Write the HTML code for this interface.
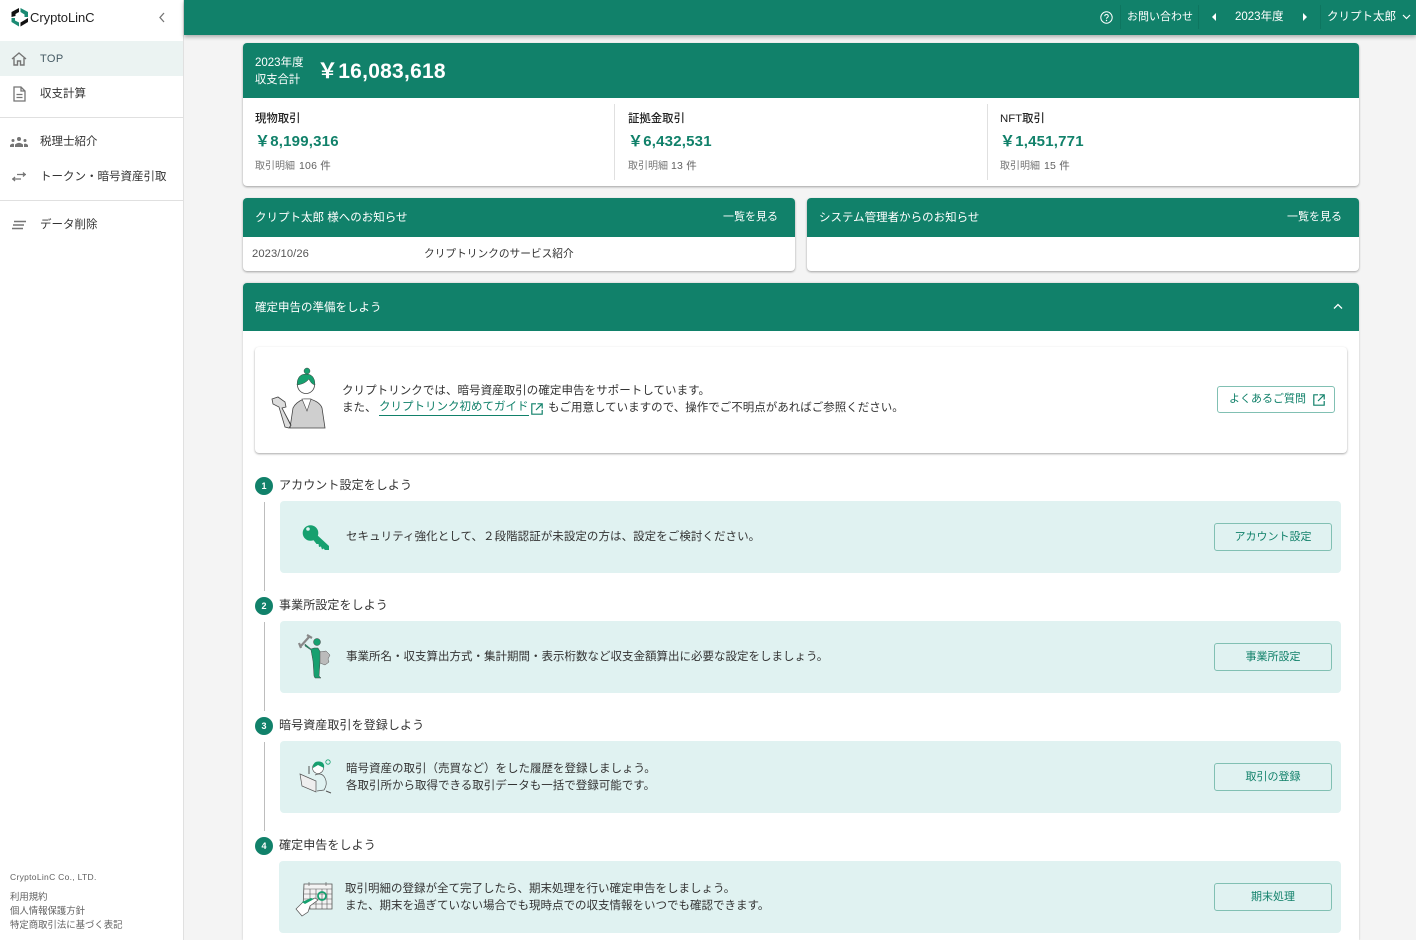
<!DOCTYPE html>
<html lang="ja"><head><meta charset="utf-8"><title>CryptoLinC</title>
<style>
html,body{margin:0;padding:0}
body{width:1416px;height:940px;overflow:hidden;background:#f4f4f4;position:relative;font-family:"Liberation Sans","Noto Sans CJK JP",sans-serif;color:#333}
.a{position:absolute}
.t{position:absolute;white-space:nowrap;line-height:18px;font-size:11.500px;color:#333}
.w{color:#fff}
.card{position:absolute;background:#fff;border-radius:4px;box-shadow:0 1px 2px rgba(0,0,0,.35)}
.bar{position:absolute;background:#11816a}
.sep{position:absolute;left:0;width:183px;height:1px;background:#e0e0e0}
.btn{position:absolute;box-sizing:border-box;border:1px solid #81c0b3;border-radius:3px;color:#11816a;font-size:11px;line-height:26px;text-align:center;white-space:nowrap}
.num{position:absolute;left:255px;width:18px;height:18px;border-radius:50%;background:#11816a;color:#fff;font-size:9px;font-weight:bold;line-height:19px;text-align:center}
.step{position:absolute;background:#e0f2f1;border-radius:4px;height:72px;right:75px}
.line{position:absolute;left:264px;width:1px;background:#bdbdbd}
.h{font-size:12px;letter-spacing:.1px}
.m{font-size:15px;font-weight:bold;color:#11816a;letter-spacing:.2px}
.n{font-size:11.400px;font-weight:500;color:#222}
.d{font-size:10px;color:#757575}
.c{font-size:10.500px;color:#616161;letter-spacing:.2px}
.f{font-size:9.400px;color:#616161}
svg{position:absolute;overflow:visible}
</style></head><body>

<!-- sidebar -->
<div class="a" style="left:0;top:0;width:183px;height:940px;background:#fff;border-right:1px solid #e0e0e0"></div>
<svg style="left:10px;top:7px" width="20" height="20" viewBox="0 0 20 20"><path d="M9 1 1.500 5v5l4-1V7L9 5z" fill="#111"/><path d="M10.500 1 18 5v5h-3.500V7.500L10.500 5z" fill="#1b8a73"/><path d="M18 11v4l-7.500 4.500V15.500L14 13.500z" fill="#111"/><path d="M9 19.500 1.500 15V11H5v2.500l4 2z" fill="#1b8a73"/></svg>
<div class="t" style="left:30px;top:9px;font-size:13px;letter-spacing:-.05px;color:#222">CryptoLinC</div>
<svg style="left:157px;top:12px" width="10" height="11" viewBox="0 0 10 11"><path d="M7 1 3 5.500 7 10" fill="none" stroke="#757575" stroke-width="1.300"/></svg>

<div class="a" style="left:0;top:41px;width:183px;height:35px;background:#ebf3f2"></div>
<svg style="left:11px;top:51px" width="16" height="16" viewBox="0 0 16 16"><path d="M1 8 8 2l7 6M3 7v7h3.500V10h3v4H13V7" fill="none" stroke="#757575" stroke-width="1.400"/></svg>
<div class="t" style="left:40px;top:50px;font-size:11px;letter-spacing:.4px;color:#455a64">TOP</div>
<svg style="left:13px;top:86px" width="13" height="16" viewBox="0 0 13 16"><path d="M1 1h7l4 4v10H1zM8 1v4h4M3.500 8.500h6M3.500 11.500h6" fill="none" stroke="#757575" stroke-width="1.300"/></svg>
<div class="t" style="left:40px;top:85px">収支計算</div>
<div class="sep" style="top:117px"></div>
<svg style="left:10px;top:137px" width="18" height="10" viewBox="0 0 18 10"><g fill="#757575"><circle cx="9" cy="2" r="2"/><path d="M5 10V7.500Q9 4 13 7.500V10z"/><circle cx="3" cy="3.500" r="1.500"/><path d="M0 10V8q2-2 4-1v3z"/><circle cx="15" cy="3.500" r="1.500"/><path d="M18 10V8q-2-2-4-1v3z"/></g></svg>
<div class="t" style="left:40px;top:133px">税理士紹介</div>
<svg style="left:12px;top:171px" width="14" height="12" viewBox="0 0 14 12"><path d="M0 8h9M3 6 1 8l2 2M5 3.500h9M11 1.500l2 2-2 2" fill="none" stroke="#757575" stroke-width="1.300"/></svg>
<div class="t" style="left:40px;top:168px">トークン・暗号資産引取</div>
<div class="sep" style="top:200px"></div>
<svg style="left:12px;top:220px" width="14" height="10" viewBox="0 0 14 10"><path d="M2 1.500h12M1 5h11M0 8.500h11" fill="none" stroke="#757575" stroke-width="1.500"/></svg>
<div class="t" style="left:40px;top:216px">データ削除</div>

<div class="t f" style="left:10px;top:868px;font-size:8.500px;letter-spacing:.3px">CryptoLinC Co., LTD.</div>
<div class="t f" style="left:10px;top:888px">利用規約</div>
<div class="t f" style="left:10px;top:902px">個人情報保護方針</div>
<div class="t f" style="left:10px;top:916px">特定商取引法に基づく表記</div>

<!-- header -->
<div class="a" style="left:184px;top:0;width:1232px;height:35px;background:#11816a;box-shadow:0 2px 4px rgba(0,0,0,.3)"></div>
<svg style="left:1100px;top:11px" width="13" height="13" viewBox="0 0 13 13"><circle cx="6.500" cy="6.500" r="5.700" fill="none" stroke="#fff" stroke-width="1"/><path d="M4.700 5.200Q4.800 3.500 6.500 3.500T8.300 5.200C8.300 6.300 6.500 6.400 6.500 7.800" fill="none" stroke="#fff"/><circle cx="6.500" cy="9.500" r=".7" fill="#fff"/></svg>
<div class="a" style="left:1120px;top:5px;width:1px;height:24px;background:#0e7660"></div>
<div class="t w" style="left:1127px;top:8px;font-size:11px">お問い合わせ</div>
<div class="a" style="left:1198px;top:5px;width:1px;height:24px;background:#0e7660"></div>
<svg style="left:1212px;top:13px" width="4" height="8"><path d="M4 0v8L0 4z" fill="#fff"/></svg>
<div class="t w" style="left:1235px;top:8px;font-size:11.500px">2023年度</div>
<svg style="left:1303px;top:13px" width="4" height="8"><path d="M0 0v8l4-4z" fill="#fff"/></svg>
<div class="a" style="left:1320px;top:5px;width:1px;height:24px;background:#0e7660"></div>
<div class="t w" style="left:1327px;top:8px;font-size:11.500px">クリプト太郎</div>
<svg style="left:1402px;top:14px" width="9" height="6"><path d="M1 1l3.500 3.500L8 1" fill="none" stroke="#fff" stroke-width="1.200"/></svg>

<!-- summary -->
<div class="card" style="left:243px;top:43px;width:1116px;height:143px"></div>
<div class="bar" style="left:243px;top:43px;width:1116px;height:55px;border-radius:4px 4px 0 0"></div>
<div class="t w" style="left:255px;top:54px;font-size:11.500px">2023年度</div>
<div class="t w" style="left:255px;top:71px;font-size:11.300px">収支合計</div>
<div class="t w" style="left:317px;top:58px;font-size:21px;line-height:28px;font-weight:bold;letter-spacing:.25px">￥16,083,618</div>

<div class="a" style="left:614px;top:104px;width:1px;height:76px;background:#e0e0e0"></div>
<div class="a" style="left:987px;top:104px;width:1px;height:76px;background:#e0e0e0"></div>
<div class="t n" style="left:255px;top:110px">現物取引</div>
<div class="t m" style="left:255px;top:133px">￥8,199,316</div>
<div class="t d" style="left:255px;top:158px">取引明細</div>
<div class="t c" style="left:299px;top:157px">106 件</div>
<div class="t n" style="left:628px;top:110px">証拠金取引</div>
<div class="t m" style="left:628px;top:133px">￥6,432,531</div>
<div class="t d" style="left:628px;top:158px">取引明細</div>
<div class="t c" style="left:671px;top:157px">13 件</div>
<div class="t n" style="left:1000px;top:110px">NFT取引</div>
<div class="t m" style="left:1000px;top:133px">￥1,451,771</div>
<div class="t d" style="left:1000px;top:158px">取引明細</div>
<div class="t c" style="left:1044px;top:157px">15 件</div>

<!-- notices -->
<div class="card" style="left:243px;top:198px;width:552px;height:73px"></div>
<div class="bar" style="left:243px;top:198px;width:552px;height:39px;border-radius:4px 4px 0 0"></div>
<div class="t w" style="left:255px;top:209px">クリプト太郎 様へのお知らせ</div>
<div class="t w" style="left:723px;top:208px;font-size:11px">一覧を見る</div>
<div class="t" style="left:252px;top:245px;font-size:11.200px;letter-spacing:.1px;color:#555">2023/10/26</div>
<div class="t" style="left:424px;top:245px;font-size:10.700px">クリプトリンクのサービス紹介</div>

<div class="card" style="left:807px;top:198px;width:552px;height:73px"></div>
<div class="bar" style="left:807px;top:198px;width:552px;height:39px;border-radius:4px 4px 0 0"></div>
<div class="t w" style="left:819px;top:209px">システム管理者からのお知らせ</div>
<div class="t w" style="left:1287px;top:208px;font-size:11px">一覧を見る</div>

<!-- guide -->
<div class="a" style="left:243px;top:283px;width:1116px;height:657px;background:#fff;border-radius:4px 4px 0 0;box-shadow:0 0 2px rgba(0,0,0,.2)"></div>
<div class="bar" style="left:243px;top:283px;width:1116px;height:48px;border-radius:4px 4px 0 0"></div>
<div class="t w" style="left:255px;top:299px">確定申告の準備をしよう</div>
<svg style="left:1333px;top:303px" width="10" height="7"><path d="M1 5.500 5 1.500l4 4" fill="none" stroke="#fff" stroke-width="1.300"/></svg>

<div class="card" style="left:255px;top:347px;width:1092px;height:106px"></div>
<svg style="left:270px;top:366px" width="58" height="64" viewBox="0 0 58 64">
<path d="M20 62 23 42Q26 36 34 33H40Q50 36 52 42L55 62z" fill="#cfcfcf" stroke="#444" stroke-width=".8"/>
<path d="M32 33l5 12 4-12z" fill="#fff" stroke="#444" stroke-width=".6"/>
<path d="M2 33l6-2 7 5 1 5-4 1 9 17-2 3-4-1L9 41 3 38z" fill="#ddd" stroke="#444" stroke-width=".8"/>
<path d="M12 42l9 18" stroke="#444" stroke-width=".6"/>
<circle cx="36" cy="19" r="8.500" fill="#fff" stroke="#444" stroke-width=".8"/>
<path d="M27 19q0-11 9-11t9 11q-4-1-6-6-4 5-12 6z" fill="#16a06f" stroke="#444" stroke-width=".5"/>
<circle cx="37" cy="5" r="3" fill="#16a06f" stroke="#444" stroke-width=".5"/>
</svg>
<div class="t" style="left:342px;top:382px;letter-spacing:.05px">クリプトリンクでは、暗号資産取引の確定申告をサポートしています。</div>
<div class="t" style="left:342px;top:399px">また、</div>
<div class="t" style="left:379px;top:399px;color:#11816a;border-bottom:1px solid #11816a;line-height:16px">クリプトリンク初めてガイド</div>
<svg style="left:531px;top:403px" width="12" height="12" viewBox="0 0 12 12"><path d="M5 .800H.800v10.400H11.200V7M6.500.800h4.700v4.700M11 1 5 7" fill="none" stroke="#11816a" stroke-width="1.200"/></svg>
<div class="t" style="left:548px;top:399px">もご用意していますので、操作でご不明点があればご参照ください。</div>
<div class="btn" style="left:1217px;top:386px;width:118px;height:27px;text-align:left;padding-left:11px;line-height:25px">よくあるご質問</div>
<svg style="left:1313px;top:394px" width="12" height="12" viewBox="0 0 12 12"><path d="M5 .800H.800v10.400H11.200V7M6.500.800h4.700v4.700M11 1 5 7" fill="none" stroke="#11816a" stroke-width="1.200"/></svg>

<!-- steps -->
<div class="line" style="top:502px;height:89px"></div>
<div class="line" style="top:622px;height:89px"></div>
<div class="line" style="top:742px;height:89px"></div>

<div class="num" style="top:477px">1</div>
<div class="t h" style="left:279px;top:476px">アカウント設定をしよう</div>
<div class="step" style="left:280px;top:501px"></div>
<svg style="left:303px;top:524px" width="27" height="27" viewBox="0 0 27 27"><circle cx="7.500" cy="9" r="7.800" fill="#16a06f"/><path d="M10 15.500 13 10l13 12v4h-4l-1.500-1.500-1.500 1-1-3-2 .5-.5-3-2 0z" fill="#16a06f"/><circle cx="5" cy="5" r="1.800" fill="#e0f2f1"/></svg>
<div class="t" style="left:346px;top:528px;letter-spacing:.05px">セキュリティ強化として、２段階認証が未設定の方は、設定をご検討ください。</div>
<div class="btn" style="left:1214px;top:523px;width:118px;height:28px">アカウント設定</div>

<div class="num" style="top:597px">2</div>
<div class="t h" style="left:279px;top:596px">事業所設定をしよう</div>
<div class="step" style="left:280px;top:621px"></div>
<svg style="left:297px;top:633px" width="34" height="48" viewBox="0 0 34 48">
<path d="M3 14 12 4M2 10l2 5M10 2l5 3" fill="none" stroke="#888" stroke-width="2.200"/>
<path d="M8 11l6 5 3-1h4l3 5-1 9-1 14 2 2h-6l-1-2-1-15-2-11-6-4z" fill="#16a06f" stroke="#444" stroke-width=".5"/>
<circle cx="20" cy="9" r="3.500" fill="#16a06f" stroke="#444" stroke-width=".5"/>
<path d="M23 19l6-1 4 4-2 4 1 3-4 3-5-2z" fill="#bbb" stroke="#555" stroke-width=".5"/>
</svg>
<div class="t" style="left:346px;top:648px">事業所名・収支算出方式・集計期間・表示桁数など収支金額算出に必要な設定をしましょう。</div>
<div class="btn" style="left:1214px;top:643px;width:118px;height:28px">事業所設定</div>

<div class="num" style="top:717px">3</div>
<div class="t h" style="left:279px;top:716px">暗号資産取引を登録しよう</div>
<div class="step" style="left:280px;top:741px"></div>
<svg style="left:299px;top:757px" width="35" height="38" viewBox="0 0 35 38">
<path d="M1 17l16 7v11L3 29z" fill="#eee" stroke="#555" stroke-width=".7"/>
<circle cx="19" cy="11" r="5.500" fill="#fff" stroke="#555" stroke-width=".6"/>
<path d="M14 11q0-7 6-6.500t5 6.500l-6-3z" fill="#16a06f"/>
<path d="M16 18q7-3 10 3t-1 12l-7 1" fill="none" stroke="#555" stroke-width=".7"/>
<circle cx="29" cy="5" r="2.200" fill="none" stroke="#16a06f" stroke-width=".8"/>
<path d="M10 9v8M27 34l5 2" stroke="#555" stroke-width="1"/>
</svg>
<div class="t" style="left:346px;top:760px">暗号資産の取引（売買など）をした履歴を登録しましょう。</div>
<div class="t" style="left:346px;top:777px">各取引所から取得できる取引データも一括で登録可能です。</div>
<div class="btn" style="left:1214px;top:763px;width:118px;height:28px">取引の登録</div>

<div class="num" style="top:837px">4</div>
<div class="t h" style="left:279px;top:836px">確定申告をしよう</div>
<div class="step" style="left:279px;top:861px"></div>
<svg style="left:295px;top:881px" width="38" height="36" viewBox="0 0 38 36">
<path d="M9 3h28v25H8z" fill="#f3f3f3" stroke="#555" stroke-width=".8"/>
<path d="M9 8h28M9 13h28M9 18h28M9 23h28M15 8v20M21 8v20M27 8v20M32 8v20M14 1v4M31 1v4" stroke="#555" stroke-width=".6"/>
<circle cx="27" cy="15" r="4" fill="none" stroke="#16a06f" stroke-width="1.800"/>
<path d="M1 28l7-7 12-4 3 2-8 6-2 6-6 4z" fill="#fff" stroke="#555" stroke-width=".7"/>
<path d="M7 21l9-4 3 1-9 5z" fill="#16a06f"/>
</svg>
<div class="t" style="left:345px;top:880px">取引明細の登録が全て完了したら、期末処理を行い確定申告をしましょう。</div>
<div class="t" style="left:345px;top:897px">また、期末を過ぎていない場合でも現時点での収支情報をいつでも確認できます。</div>
<div class="btn" style="left:1214px;top:883px;width:118px;height:28px">期末処理</div>

</body></html>
